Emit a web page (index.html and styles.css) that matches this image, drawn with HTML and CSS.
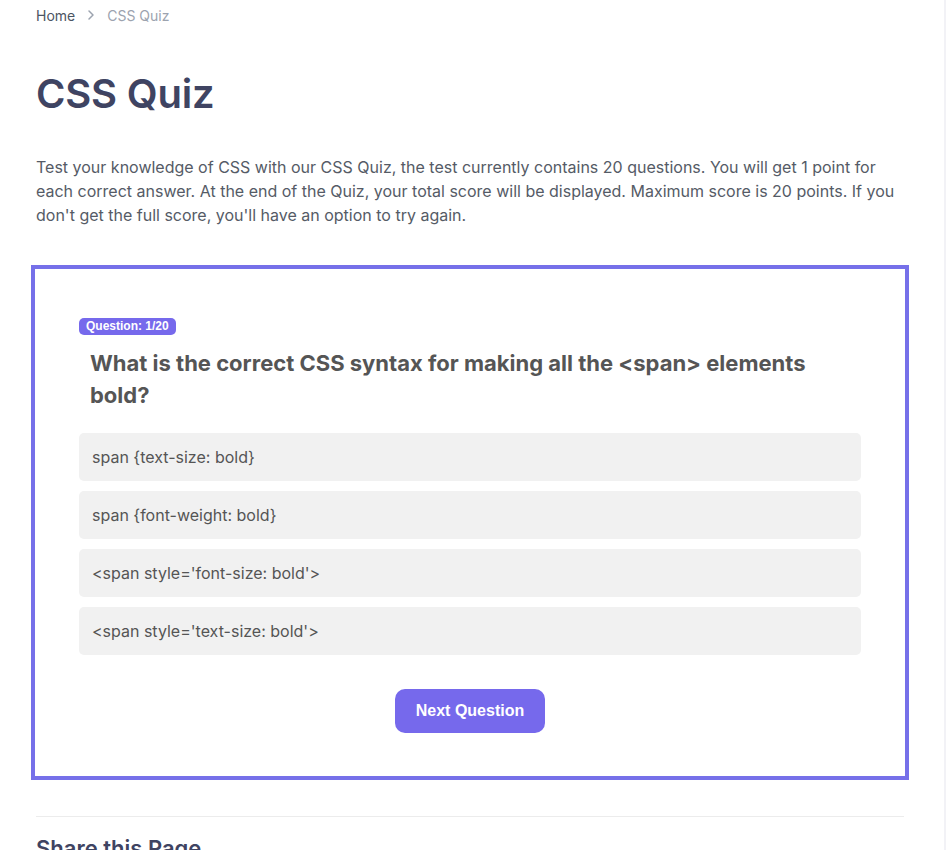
FILE: index.html
```html
<!DOCTYPE html>
<html lang="en">
<head>
<meta charset="utf-8">
<title>CSS Quiz</title>
<link rel="stylesheet" href="styles.css">
</head>
<body>
<div class="page">
  <main class="main">
    <nav class="crumbs">
      <a class="crumb-link" href="#">Home</a>
      <svg class="chev" width="16" height="16" viewBox="0 0 16 16" aria-hidden="true"><path d="M6 4l4 4-4 4" fill="none" stroke="currentColor" stroke-width="1.5" stroke-linecap="round" stroke-linejoin="round"/></svg>
      <span class="crumb-current">CSS Quiz</span>
    </nav>
    <h1 class="title">CSS Quiz</h1>
    <p class="intro">Test your knowledge of CSS with our CSS Quiz, the test currently contains 20 questions. You will get 1 point for each correct answer. At the end of the Quiz, your total score will be displayed. Maximum score is 20 points. If you don't get the full score, you'll have an option to try again.</p>

    <section class="quiz">
      <div class="quiz-head">
        <span class="badge">Question: 1/20</span>
      </div>
      <h2 class="question">What is the correct CSS syntax for making all the &lt;span&gt; elements bold?</h2>
      <ul class="options">
        <li class="option">span {text-size: bold}</li>
        <li class="option">span {font-weight: bold}</li>
        <li class="option">&lt;span style='font-size: bold'&gt;</li>
        <li class="option">&lt;span style='text-size: bold'&gt;</li>
      </ul>
      <div class="actions">
        <button class="next" type="button">Next Question</button>
      </div>
    </section>

    <hr class="rule">
    <h2 class="share">Share this Page</h2>
  </main>
  <div class="edge"></div>
</div>
</body>
</html>
```

FILE: styles.css
```css
* { box-sizing: border-box; }
html, body { margin: 0; padding: 0; background: #fff; }
body {
  font-family: Inter, "Noto Sans", Arial, sans-serif;
  color: #4b5563;
  overflow: hidden;
  height: 850px;
}
.page {
  display: flex;
  min-height: 850px;
}
.main {
  flex: 1;
  padding: 5px 40px 0 36px;
}
.edge {
  width: 2px;
  background: #f2f2f6;
}
.crumbs {
  display: flex;
  align-items: center;
  height: 20px;
  font-size: 14px;
  gap: 8px;
}
.crumb-link { color: #4b5563; text-decoration: none; }
.chev { color: #9ca3af; }
.crumb-current { color: #9ca3af; }
.title {
  margin: 41px 0 0;
  font-size: 40px;
  line-height: 56px;
  font-weight: 600;
  color: #3f4462;
  letter-spacing: -0.2px;
}
.intro {
  margin: 33px 0 0;
  font-size: 16px;
  line-height: 24px;
  color: #555b66;
}
.quiz {
  margin: 38px -5px 0;
  border: 4px solid #7670e9;
  padding: 49px 44px 43px;
}
.quiz-head {
  display: flex;
}
.badge {
  background: #7669ec;
  color: #fff;
  font-family: "Liberation Sans", Arial, sans-serif;
  font-size: 12px;
  font-weight: 700;
  line-height: 17px;
  padding: 0 7px;
  border-radius: 5px;
}
.question {
  margin: 12px 0 0;
  padding: 0 11px;
  font-size: 22px;
  line-height: 32px;
  font-weight: 700;
  color: #555555;
}
.options {
  list-style: none;
  margin: 22px 0 0;
  padding: 0;
  display: flex;
  flex-direction: column;
  gap: 10px;
}
.option {
  background: #f1f1f1;
  border-radius: 5px;
  height: 48px;
  display: flex;
  align-items: center;
  padding: 0 13px;
  font-size: 16px;
  color: #555555;
}
.actions {
  display: flex;
  justify-content: center;
  margin-top: 34px;
}
.next {
  font-family: "Liberation Sans", Arial, sans-serif;
  border: none;
  background: #7669ec;
  color: #fff;
  font-size: 16px;
  font-weight: 700;
  height: 44px;
  padding: 0 21px;
  border-radius: 10px;
  cursor: pointer;
}
.rule {
  border: none;
  border-top: 1px solid #ececec;
  margin: 36px 0 0;
}
.share {
  margin: 16px 0 0;
  font-size: 22px;
  line-height: 30px;
  font-weight: 600;
  color: #3f4462;
}
```
